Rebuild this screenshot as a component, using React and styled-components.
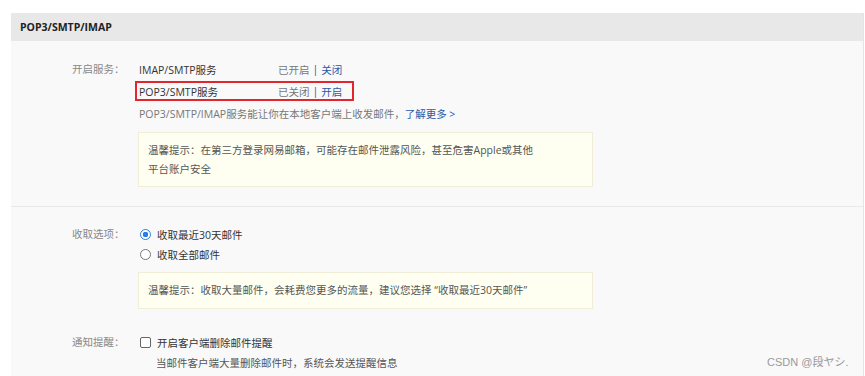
import React from "react";
import styled, { createGlobalStyle } from "styled-components";

const GlobalStyle = createGlobalStyle`
    html, body {
        margin: 0;
        padding: 0;
        background: #ffffff;
    }
    body {
        font-family: "Open Sans", "Noto Sans CJK SC", sans-serif;
        font-size: 10.5px;
        color: #333;
    }
`;

const Page = styled.div`
    position: relative;
    width: 865px;
    height: 376px;
    overflow: hidden;
    padding: 13px 0 0 11px;
    box-sizing: border-box;
`;

const Panel = styled.div`
    width: 853px;
    background: #f9f9f9;
    border-right: 1px solid #e4e4e4;
    box-sizing: border-box;
`;

const PanelHeader = styled.div`
    height: 28px;
    display: flex;
    align-items: center;
    padding-left: 9px;
    background: #e8e8e8;
    font-weight: 700;
    color: #222;
`;

const Section = styled.div`
    padding-top: ${({ top }) => top}px;
    padding-bottom: ${({ bottom }) => bottom || 0}px;
    border-bottom: ${({ last }) => (last ? "none" : "1px solid #e9e9e9")};
`;

const Field = styled.div`
    display: grid;
    grid-template-columns: 128px 1fr;
    margin-top: ${({ gap }) => gap || 0}px;
`;

const Label = styled.div`
    padding-left: 61px;
    height: 22px;
    line-height: 22px;
    color: #888;
    white-space: nowrap;
`;

const Content = styled.div`
    display: flex;
    flex-direction: column;
    align-items: flex-start;
`;

const ServiceRow = styled.div`
    display: flex;
    align-items: center;
    width: 221px;
    height: 22px;
    margin-left: -5px;
    padding-left: 5px;
    box-sizing: border-box;
    outline: ${({ marked }) => (marked ? "2px solid #e3262d" : "none")};
    outline-offset: -3px;
`;

const ServiceName = styled.span`
    width: 139px;
    color: #333;
`;

const Status = styled.span`
    color: #777;
`;

const Link = styled.a`
    color: #2b58a8;
    text-decoration: none;
    cursor: pointer;
`;

const Bar = styled.span`
    color: #2b58a8;
    margin: 0 3px;
`;

const Desc = styled.div`
    height: 22px;
    line-height: 24px;
    color: #777;
`;

const Note = styled.div`
    width: 455px;
    margin-left: -1px;
    margin-top: ${({ top }) => top}px;
    padding: ${({ pad }) => pad};
    box-sizing: border-box;
    background: #fefff0;
    border: 1px solid #f0eed6;
    color: #555;
    line-height: 19px;
`;

const Choice = styled.label`
    display: flex;
    align-items: center;
    height: ${({ h }) => h || 20}px;
    gap: 6px;
    color: #333;
`;

const RadioDot = styled.span`
    width: 11px;
    height: 11px;
    border-radius: 50%;
    box-sizing: border-box;
    margin-left: 1px;
    border: 1px solid ${({ checked }) => (checked ? "#2f7de1" : "#777")};
    background: ${({ checked }) =>
        checked ? "radial-gradient(circle, #2f7de1 0 2.6px, #fff 3px)" : "#fff"};
`;

const CheckBox = styled.span`
    width: 11px;
    height: 11px;
    margin-left: 1px;
    border: 1px solid #666;
    border-radius: 2px;
    box-sizing: border-box;
    background: #fff;
`;

const Hint = styled.div`
    height: 20px;
    line-height: 20px;
    padding-left: 17px;
    color: #555;
`;

const Watermark = styled.div`
    position: absolute;
    left: 767px;
    top: 353px;
    color: #999;
    font-size: 11px;
    font-family: "Liberation Sans", "Noto Sans CJK JP", sans-serif;
`;

function App() {
    return (
        <>
            <GlobalStyle />
            <Page>
                <Panel>
                    <PanelHeader>POP3/SMTP/IMAP</PanelHeader>
                    <Section top={17} bottom={19}>
                        <Field>
                            <Label>开启服务：</Label>
                            <Content>
                                <ServiceRow>
                                    <ServiceName>IMAP/SMTP服务</ServiceName>
                                    <Status>已开启</Status>
                                    <Bar>|</Bar>
                                    <Link>关闭</Link>
                                </ServiceRow>
                                <ServiceRow marked>
                                    <ServiceName>POP3/SMTP服务</ServiceName>
                                    <Status>已关闭</Status>
                                    <Bar>|</Bar>
                                    <Link>开启</Link>
                                </ServiceRow>
                                <Desc>
                                    POP3/SMTP/IMAP服务能让你在本地客户端上收发邮件，<Link>了解更多 &gt;</Link>
                                </Desc>
                                <Note top={8} pad="8px 10px 7px 9px">
                                    温馨提示：在第三方登录网易邮箱，可能存在邮件泄露风险，甚至危害Apple或其他
                                    <br />
                                    平台账户安全
                                </Note>
                            </Content>
                        </Field>
                    </Section>
                    <Section top={16} bottom={20} last>
                        <Field>
                            <Label>收取选项：</Label>
                            <Content>
                                <Choice h={22}>
                                    <RadioDot checked />
                                    收取最近30天邮件
                                </Choice>
                                <Choice h={18}>
                                    <RadioDot />
                                    收取全部邮件
                                </Choice>
                                <Note top={9} pad="8px 10px 8px 9px">
                                    温馨提示：收取大量邮件，会耗费您更多的流量，建议您选择 “收取最近30天邮件”
                                </Note>
                            </Content>
                        </Field>
                        <Field gap={22}>
                            <Label>通知提醒：</Label>
                            <Content>
                                <Choice h={22}>
                                    <CheckBox />
                                    开启客户端删除邮件提醒
                                </Choice>
                                <Hint>当邮件客户端大量删除邮件时，系统会发送提醒信息</Hint>
                            </Content>
                        </Field>
                    </Section>
                </Panel>
                <Watermark>CSDN @段ヤシ.</Watermark>
            </Page>
        </>
    );
}

export default App;
